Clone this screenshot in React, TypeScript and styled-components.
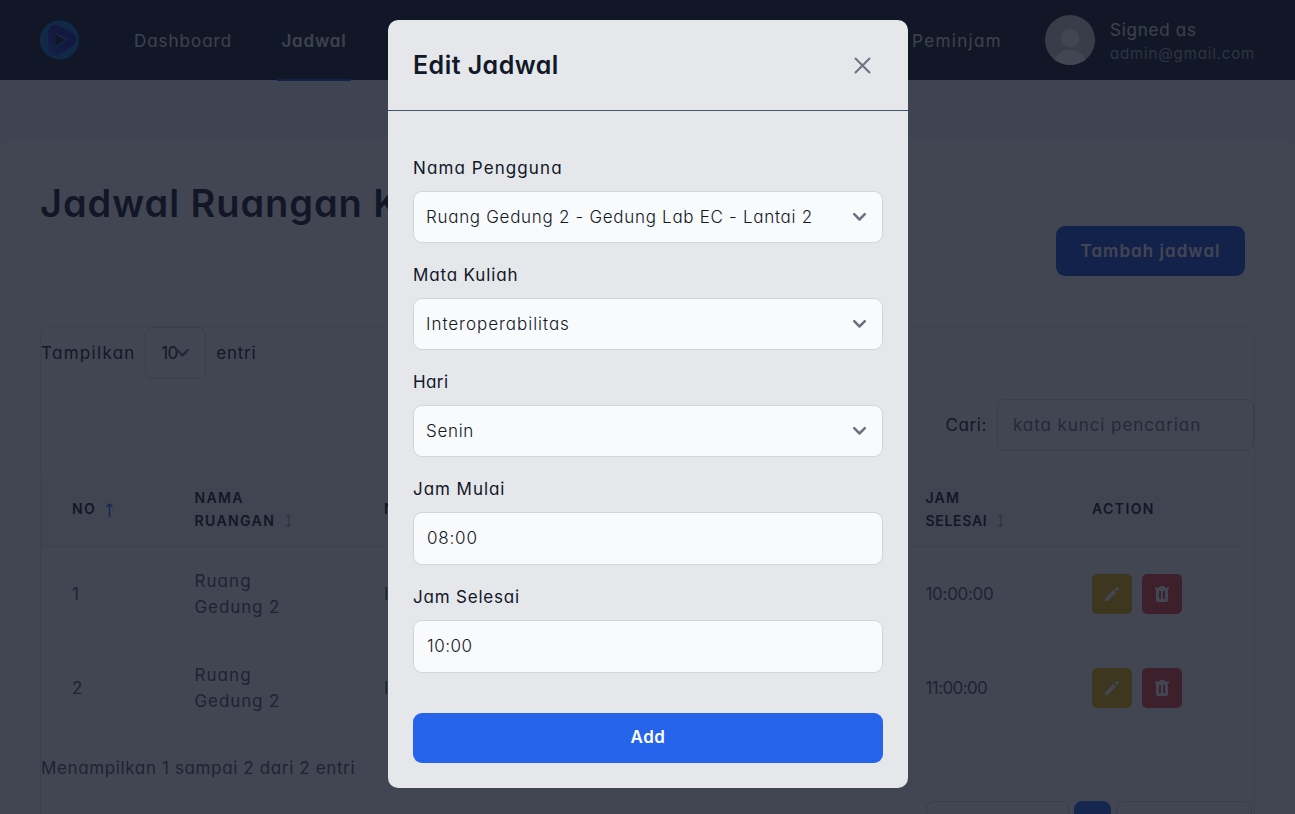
import React from "react";
import styled, { createGlobalStyle, css } from "styled-components";

const Global = createGlobalStyle`
  *, *::before, *::after { box-sizing: border-box; }
  html, body { margin: 0; height: 814px; overflow: hidden; }
  body { font-family: Inter, "Open Sans", sans-serif; font-feature-settings: "cv11"; font-size: 17px; color: #111827; background: #f1f5f9; }
  button, input { font: inherit; font-feature-settings: inherit; margin: 0; }
`;

const Text = styled.span<{ $ls?: number }>`
  letter-spacing: ${(p) => p.$ls ?? 0}px;
  white-space: nowrap;
`;

const Page = styled.div`
  height: 814px;
  overflow: hidden;
  display: flex;
  flex-direction: column;
`;

const Nav = styled.header`
  flex: none;
  height: 80px;
  background: #111827;
  color: #fff;
  display: flex;
  align-items: center;
  padding: 0 40px;
`;

const NavLinks = styled.nav`
  display: flex;
  margin-left: 50px;
  height: 82px;
  align-self: flex-start;
`;

const NavLink = styled.a<{ $active?: boolean; $width: number }>`
  width: ${(p) => p.$width}px;
  margin-right: 41px;
  padding-top: 2px;
  display: flex;
  align-items: center;
  justify-content: center;
  border-bottom: 2px solid transparent;
  height: 81px;
  color: #e5e7eb;
  ${(p) => p.$active && css`
    border-color: #1d4ed8;
    font-weight: 600;
  `}
`;

const NavRight = styled.div`
  margin-left: auto;
  display: flex;
  align-items: center;
  color: #e5e7eb;
`;

const MenuText = styled(Text)`
  padding-top: 2px;
`;

const Avatar = styled.svg`
  width: 50px;
  height: 50px;
  margin: 0 15px 0 43px;
`;

const Account = styled.div`
  width: 145px;
  padding-top: 3px;
  display: flex;
  flex-direction: column;
  line-height: 23px;
`;

const Email = styled(Text)`
  font-size: 15px;
  color: #9ca3af;
`;

const Main = styled.main`
  flex: 1;
  margin-top: 60px;
  padding: 38px 40px 0;
  background: #fff;
  border-radius: 10px 10px 0 0;
`;

const Title = styled.h1`
  margin: 0;
  height: 48px;
  font-size: 38px;
  font-weight: 600;
  line-height: 50px;
  white-space: nowrap;
`;

const Actions = styled.div`
  display: flex;
  justify-content: flex-end;
  padding-right: 10px;
  margin-bottom: 50px;
`;

const AddButton = styled.button`
  width: 189px;
  height: 50px;
  border: 0;
  border-radius: 9px;
  background: #1d4ed8;
  color: #fff;
  font-weight: 600;
`;

const Panel = styled.section`
  height: 600px;
  border: 1px solid #e2e8f0;
  border-radius: 9px;
`;

const LengthRow = styled.div`
  display: flex;
  align-items: center;
  height: 52px;
`;

const PageSize = styled.div`
  width: 61px;
  height: 52px;
  margin: 0 10px 0 9.5px;
  padding-left: 15px;
  display: flex;
  align-items: center;
  border: 1px solid #d1d5db;
  border-radius: 8px;
  svg { margin-left: -3px; }
`;

const SearchRow = styled.div`
  display: flex;
  justify-content: flex-end;
  align-items: center;
  margin-top: 20px;
  gap: 10px;
`;

const SearchInput = styled.div`
  width: 257px;
  height: 52px;
  padding-left: 15px;
  display: flex;
  align-items: center;
  border: 1px solid #d1d5db;
  border-radius: 8px;
  color: #6b7280;
`;

const columns = css`
  display: grid;
  grid-template-columns: 122.5px 189.5px 541.5px 166.5px 1fr;
  padding-left: 31px;
  align-items: center;
  width: 1200px;
`;

const HeadRow = styled.div`
  ${columns}
  height: 75px;
  margin-top: 21px;
  padding-bottom: 1px;
  background: #f9fafb;
  border-bottom: 1px solid #e5e7eb;
  border-radius: 9px 9px 0 0;
  font-size: 14px;
  font-weight: 600;
  line-height: 23px;
`;

const Row = styled.div`
  ${columns}
  height: 94px;
  line-height: 26px;
  color: #4b5563;
  & + & { box-shadow: inset 0 1px #f3f4f6; }
`;

const HeadLine = styled.div`
  display: flex;
  align-items: center;
`;

const SortIcon = styled.svg`
  margin: 2px 0 0 9px;
`;

const RowActions = styled.div`
  display: flex;
  gap: 10px;
`;

const IconButton = styled.button<{ $tone: string }>`
  width: 40px;
  height: 40px;
  padding: 0;
  border: 0;
  border-radius: 5px;
  background: ${(p) => p.$tone};
  display: grid;
  place-items: center;
`;

const Summary = styled.div`
  margin-top: 20px;
  line-height: 26px;
  color: #4b5563;
`;

const Pager = styled.div`
  display: flex;
  justify-content: flex-end;
  gap: 5px;
  margin-top: 20px;
  padding-right: 2px;
`;

const PageItem = styled.div<{ $width: number; $active?: boolean }>`
  width: ${(p) => p.$width}px;
  height: 50px;
  border-radius: 8px;
  border: 1px solid ${(p) => (p.$active ? "#2563eb" : "#d1d5db")};
  background: ${(p) => (p.$active ? "#2563eb" : "transparent")};
`;

const Overlay = styled.div`
  position: absolute;
  inset: 0;
  height: 814px;
  background: rgba(17, 24, 39, 0.8);
  display: flex;
  justify-content: center;
  align-items: flex-start;
  padding: 20px 0 0 1px;
`;

const Dialog = styled.section`
  width: 520px;
  height: 768px;
  border-radius: 10px;
  background: #e5e7eb;
  color: #111827;
`;

const DialogHead = styled.header`
  height: 91px;
  padding: 0 35px 0 25px;
  display: flex;
  justify-content: space-between;
  align-items: center;
  border-bottom: 1px solid #475569;
`;

const DialogTitle = styled.h2`
  margin: 0;
  font-size: 25px;
  font-weight: 600;
`;

const Form = styled.div`
  padding: 44px 25px 0;
`;

const Field = styled.div<{ $height: number }>`
  height: ${(p) => p.$height}px;
`;

const Label = styled.div`
  height: 36px;
  line-height: 26px;
`;

const Control = styled.div<{ $time?: boolean }>`
  height: ${(p) => (p.$time ? 53 : 52)}px;
  padding: ${(p) => (p.$time ? "0 15px 2px 13px" : "0 15px 0 12px")};
  display: flex;
  justify-content: space-between;
  align-items: center;
  border: 1px solid #d1d5db;
  border-radius: 9px;
  background: #f9fafb;
  font-weight: 300;
`;

const Submit = styled.button`
  width: 100%;
  height: 50px;
  margin-top: 21px;
  padding: 0 0 2px;
  border: 0;
  border-radius: 9px;
  background: #2563eb;
  color: #fff;
  font-weight: 600;
`;

const Chevron = () => (
  <svg width="15" height="10" viewBox="0 0 15 10" fill="none" stroke="#6b7280" strokeWidth="2.5" strokeLinecap="round" strokeLinejoin="round">
    <path d="M2.2 2.2l5.3 5.3L12.8 2.2" />
  </svg>
);

const Sort = ({ up }: { up?: boolean }) => (
  <SortIcon width="9" height="14" viewBox="0 0 9 14" fill="none" stroke={up ? "#2563eb" : "#9ca3af"} strokeWidth={up ? 1.4 : 1.2}>
    <path d={up ? "M4.5 14V1M1.5 4L4.5 1L7.5 4" : "M4.5 1V13M2 3.5L4.5 1L7 3.5M2 10.5L4.5 13L7 10.5"} />
  </SortIcon>
);

const Logo = () => (
  <svg width="40" height="40" viewBox="0 0 40 40">
    <defs>
      <linearGradient id="disc" x1="0" y1="0" x2="1" y2="1">
        <stop offset="0" stopColor="#0779b8" />
        <stop offset=".5" stopColor="#1668c8" />
        <stop offset="1" stopColor="#0779b8" />
      </linearGradient>
      <linearGradient id="knot" x1="0" y1="1" x2="1" y2="0">
        <stop offset="0" stopColor="#1d3fc4" />
        <stop offset=".5" stopColor="#1a1aa0" />
        <stop offset="1" stopColor="#1c24b0" />
      </linearGradient>
    </defs>
    <circle cx="19.5" cy="20" r="19.5" fill="url(#disc)" />
    <path d="M12 29V13Q12 8 17 9L29 15Q35 19 30 23L21 29Q12 35 12 27" fill="none" stroke="url(#knot)" strokeWidth="8" strokeLinejoin="round" strokeLinecap="round" />
    <path d="M15.5 14.5L25.5 20L15.5 26Z" fill="#111827" />
  </svg>
);

const Pencil = () => (
  <svg width="16" height="16" viewBox="0 0 16 16" fill="#fff">
    <path d="M1 12.3L9.5 3.8L12.2 6.5L3.7 15H1ZM10.7 2.6L12.1 1.2Q12.8.7 13.5 1.3L14.7 2.5Q15.3 3.2 14.8 3.9L13.4 5.3Z" />
  </svg>
);

const Trash = () => (
  <svg width="16" height="16" viewBox="0 0 16 16" fill="#fff">
    <path fillRule="evenodd" d="M5 1.5L6 0H10L11 1.5H15V3.5H14V14Q14 16 12 16H4Q2 16 2 14V3.5H1V1.5ZM5 5V13H7V5ZM9 5V13H11V5Z" />
  </svg>
);

const rows = [
  { no: "1", end: "10:00:00", ls: -0.3 },
  { no: "2", end: "11:00:00", ls: -0.6 },
];

const fields = [
  { label: "Nama Pengguna", value: "Ruang Gedung 2 - Gedung Lab EC - Lantai 2", ll: 1.1, vl: 0.7 },
  { label: "Mata Kuliah", value: "Interoperabilitas", ll: 0.85, vl: 0.97 },
  { label: "Hari", value: "Senin", ll: 0.4, vl: 0.7 },
  { label: "Jam Mulai", value: "08:00", ll: 0.95, vl: 0.8, time: true },
  { label: "Jam Selesai", value: "10:00", ll: 0.8, vl: 0.5, time: true },
];

export default function App() {
  return (
    <>
      <Global />
      <Page>
        <Nav>
          <Logo />
          <NavLinks>
            <NavLink $width={106}><Text $ls={1}>Dashboard</Text></NavLink>
            <NavLink $width={74} $active><Text $ls={0.85}>Jadwal</Text></NavLink>
          </NavLinks>
          <NavRight>
            <MenuText $ls={1.35}>Peminjam</MenuText>
            <Avatar viewBox="0 0 50 50">
              <defs><clipPath id="face"><circle cx="25" cy="25" r="25" /></clipPath></defs>
              <g clipPath="url(#face)">
                <rect width="50" height="50" fill="#cfd1d4" />
                <circle cx="25" cy="23" r="9.3" fill="#fff" />
                <circle cx="25" cy="53" r="18" fill="#fff" />
              </g>
            </Avatar>
            <Account>
              <Text $ls={0.75}>Signed as</Text>
              <Email $ls={0.85}>admin@gmail.com</Email>
            </Account>
          </NavRight>
        </Nav>
        <Main>
          <Title><Text $ls={0.93}>Jadwal Ruangan Kelas</Text></Title>
          <Actions><AddButton><Text $ls={1.05}>Tambah jadwal</Text></AddButton></Actions>
          <Panel>
            <LengthRow>
              <Text $ls={1.3}>Tampilkan</Text>
              <PageSize><Text $ls={-0.5}>10</Text><Chevron /></PageSize>
              <Text $ls={0.8}>entri</Text>
            </LengthRow>
            <SearchRow>
              <Text $ls={0.6}>Cari:</Text>
              <SearchInput><Text $ls={0.92}>kata kunci pencarian</Text></SearchInput>
            </SearchRow>
            <HeadRow>
              <HeadLine><Text $ls={1.4}>NO</Text><Sort up /></HeadLine>
              <div><Text $ls={1.3}>NAMA</Text><HeadLine><Text $ls={1.4}>RUANGAN</Text><Sort /></HeadLine></div>
              <Text $ls={1}>NAMA</Text>
              <div><Text $ls={1.2}>JAM</Text><HeadLine><Text $ls={0.7}>SELESAI</Text><Sort /></HeadLine></div>
              <Text $ls={1.4}>ACTION</Text>
            </HeadRow>
            {rows.map((r) => (
              <Row key={r.no}>
                <Text>{r.no}</Text>
                <div><Text $ls={1.05}>Ruang</Text><br /><Text $ls={0.9}>Gedung 2</Text></div>
                <Text>Interoperabilitas</Text>
                <Text $ls={r.ls}>{r.end}</Text>
                <RowActions>
                  <IconButton $tone="#eab308" aria-label="Edit"><Pencil /></IconButton>
                  <IconButton $tone="#ef4444" aria-label="Hapus"><Trash /></IconButton>
                </RowActions>
              </Row>
            ))}
            <Summary><Text $ls={0.63}>Menampilkan 1 sampai 2 dari 2 entri</Text></Summary>
            <Pager>
              <PageItem $width={143} />
              <PageItem $width={37} $active />
              <PageItem $width={136} />
            </Pager>
          </Panel>
        </Main>
      </Page>
      <Overlay>
        <Dialog>
          <DialogHead>
            <DialogTitle><Text $ls={0.45}>Edit Jadwal</Text></DialogTitle>
            <svg width="21" height="21" viewBox="0 0 21 21" stroke="#6b7280" strokeWidth="2" strokeLinecap="round">
              <path d="M3.5 3.5L17.5 17.5M17.5 3.5L3.5 17.5" />
            </svg>
          </DialogHead>
          <Form>
            {fields.map((f) => (
              <Field key={f.label} $height={f.time ? 108 : 107}>
                <Label><Text $ls={f.ll}>{f.label}</Text></Label>
                <Control $time={f.time}>
                  <Text $ls={f.vl}>{f.value}</Text>
                  {!f.time && <Chevron />}
                </Control>
              </Field>
            ))}
            <Submit><Text $ls={0.6}>Add</Text></Submit>
          </Form>
        </Dialog>
      </Overlay>
    </>
  );
}
